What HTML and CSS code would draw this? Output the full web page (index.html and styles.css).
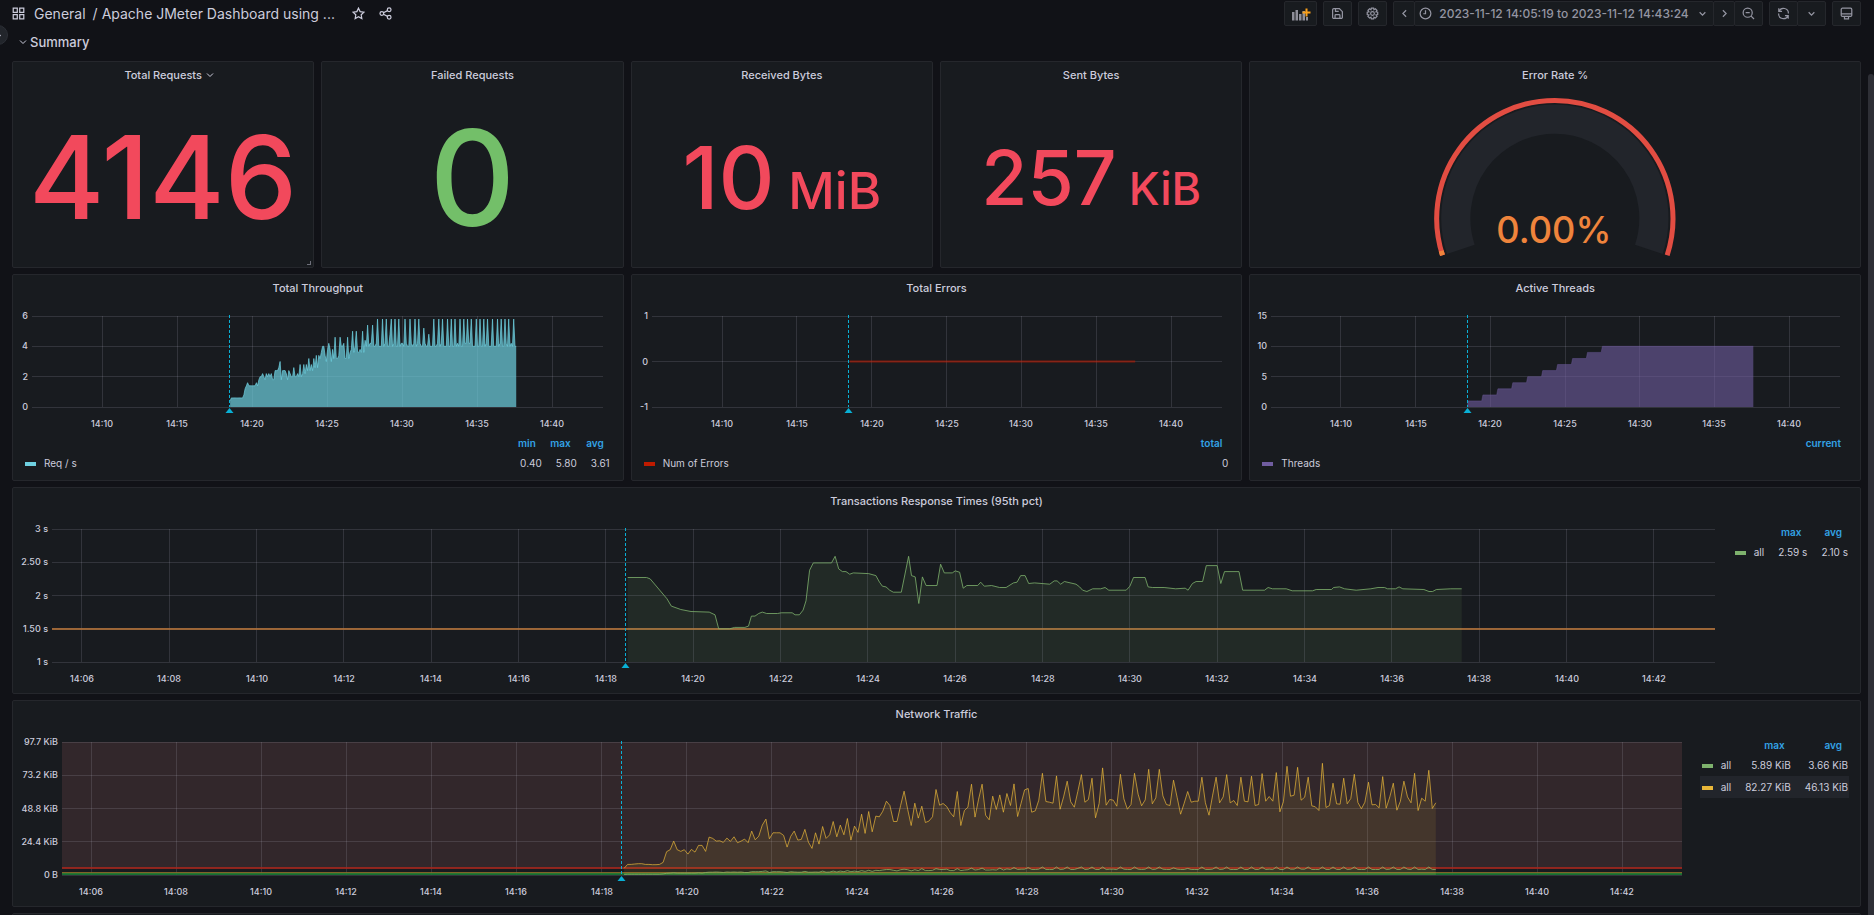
FILE: index.html
```html
<!DOCTYPE html>
<html lang="en">
<head>
  <meta charset="UTF-8">
  <meta name="viewport" content="width=device-width, initial-scale=1.0">
  <link rel="stylesheet" href="styles.css">
  <title>Apache JMeter Dashboard</title>
</head>
<body>
  <div class="app">
    <button class="menu-toggle" type="button" aria-label="Expand menu">
      <svg class="icon" viewBox="0 0 16 16"><path d="M6 4l4 4-4 4"/></svg>
    </button>

    <header class="navbar">
      <svg class="icon" viewBox="0 0 16 16"><path d="M1.5 1.5h5v5h-5zM9.5 1.5h5v5h-5zM1.5 9.5h5v5h-5zM9.5 9.5h5v5h-5z"/></svg>
      <h1 class="breadcrumb">
        <a href="#">General</a><span class="slash">/</span><a href="#">Apache JMeter Dashboard using ...</a>
      </h1>
      <button class="plain" type="button" aria-label="Mark as favorite">
        <svg class="icon" viewBox="0 0 16 16"><path d="M8 1.4l2 4.3 4.7.6-3.4 3.3.8 4.7L8 12l-4.1 2.3.8-4.7L1.3 6.3 6 5.7z"/></svg>
      </button>
      <button class="plain" type="button" aria-label="Share dashboard">
        <svg class="icon" viewBox="0 0 16 16"><circle cx="3.5" cy="8" r="2.3"/><circle cx="12.5" cy="3.5" r="2.3"/><circle cx="12.5" cy="12.5" r="2.3"/><path d="M5.5 7l5-2.5M5.5 9l5 2.5"/></svg>
      </button>

      <div class="toolbar">
        <button class="btn btn-add" type="button" aria-label="Add panel">
          <svg class="icon-add" viewBox="0 0 20 14"><path class="bars" d="M1 5h2.5v8.5H1zM4.5 3H7v10.5H4.5zM8 7h2.5v6.5H8zM11.5 4H14v9.5h-2.5zM15 10h2v3.5h-2z"/><path class="plus" d="M15.5 1.5v8M11.5 5.5h8"/></svg>
        </button>
        <button class="btn" type="button" aria-label="Save dashboard">
          <svg class="icon" viewBox="0 0 16 16"><path d="M3.5 2h6.8L14 5.7v6.8a1.5 1.5 0 0 1-1.5 1.5h-9A1.5 1.5 0 0 1 2 12.5v-9A1.5 1.5 0 0 1 3.5 2zM5.5 2v3.5h4M5 14v-3.5a1 1 0 0 1 1-1h4a1 1 0 0 1 1 1V14"/></svg>
        </button>
        <button class="btn" type="button" aria-label="Dashboard settings">
          <svg class="icon" viewBox="0 0 16 16"><path d="M6.6 1.3h2.8l.4 2 1.7-1.1 2 2-1.2 1.7 2.1.5v2.9l-2.1.5 1.2 1.8-2 2-1.7-1.1-.4 2H6.6l-.5-2-1.7 1.1-2-2 1.2-1.8-2.1-.5V6.4l2.1-.5-1.2-1.7 2-2 1.7 1.1z"/><circle cx="8" cy="8" r="2.3"/></svg>
        </button>
        <div class="btn-group">
          <button class="btn btn-narrow" type="button" aria-label="Move time range backwards">
            <svg class="icon" viewBox="0 0 16 16"><path d="M10 4L6 8l4 4"/></svg>
          </button>
          <button class="btn btn-time" type="button">
            <svg class="icon" viewBox="0 0 16 16"><circle cx="8" cy="8" r="6.6"/><path d="M8 4v4.3H5.3"/></svg>
            <span>2023-11-12 14:05:19 to 2023-11-12 14:43:24</span>
            <svg class="icon" viewBox="0 0 16 16"><path d="M4.5 6.5L8 10l3.5-3.5"/></svg>
          </button>
          <button class="btn btn-narrow" type="button" aria-label="Move time range forwards">
            <svg class="icon" viewBox="0 0 16 16"><path d="M6 4l4 4-4 4"/></svg>
          </button>
          <button class="btn" type="button" aria-label="Zoom out time range">
            <svg class="icon" viewBox="0 0 16 16"><circle cx="7" cy="7" r="5.6"/><path d="M11.2 11.2l3.6 3.6M4.5 7h5"/></svg>
          </button>
        </div>
        <div class="btn-group">
          <button class="btn" type="button" aria-label="Refresh dashboard">
            <svg class="icon" viewBox="0 0 16 16"><path d="M2.2 1.5v4h4M2.5 5.3A6 6 0 0 1 14 8M13.8 14.5v-4h-4M13.5 10.7A6 6 0 0 1 2 8"/></svg>
          </button>
          <button class="btn" type="button" aria-label="Auto refresh interval">
            <svg class="icon" viewBox="0 0 16 16"><path d="M4.5 6.5L8 10l3.5-3.5"/></svg>
          </button>
        </div>
        <button class="btn" type="button" aria-label="Cycle view mode">
          <svg class="icon" viewBox="0 0 16 16"><path d="M3 1.5h10A1.5 1.5 0 0 1 14.5 3v7a1.5 1.5 0 0 1-1.5 1.5H3A1.5 1.5 0 0 1 1.5 10V3A1.5 1.5 0 0 1 3 1.5zM1.5 8.5h13M5.5 11.5v3h5v-3"/></svg>
        </button>
      </div>
    </header>

    <main class="dashboard">
      <button class="row-title" type="button">
        <svg class="icon icon-sm" viewBox="0 0 16 16"><path d="M2 5l6 6 6-6"/></svg>
        Summary
      </button>

      <div class="panels">
        <section class="panel">
          <h2>Total Requests <svg class="icon icon-sm" viewBox="0 0 16 16"><path d="M2 5l6 6 6-6"/></svg></h2>
          <div class="stat stat-xl red">4146</div>
          <span class="resize-handle"></span>
        </section>
        <section class="panel">
          <h2>Failed Requests</h2>
          <div class="stat stat-xxl green">0</div>
        </section>
        <section class="panel">
          <h2>Received Bytes</h2>
          <div class="stat stat-lg red"><p>10<span class="unit"> MiB</span></p></div>
        </section>
        <section class="panel">
          <h2>Sent Bytes</h2>
          <div class="stat stat-md red"><p>257<span class="unit"> KiB</span></p></div>
        </section>
        <section class="panel span-2">
          <h2>Error Rate %</h2>
          <svg class="gauge" viewBox="0 0 260 178">
            <path class="gauge-track" d="M36.5 160.4A98.5 98.5 0 1 1 223.5 160.4"/>
            <path class="gauge-limit" d="M18.3 166.3A117.5 117.5 0 1 1 241.7 166.3"/>
            <path class="gauge-value" d="M18.3 166.3A117.5 117.5 0 0 1 17 162"/>
            <text x="129" y="154">0.00%</text>
          </svg>
        </section>

        <section class="panel span-2">
          <h2>Total Throughput</h2>
          <div class="chart" id="throughput"></div>
          <table class="legend legend-bottom">
            <thead><tr><td class="name"></td><th>min</th><th>max</th><th>avg</th></tr></thead>
            <tbody><tr><td class="name"><i class="swatch cyan"></i>Req / s</td><td>0.40</td><td>5.80</td><td>3.61</td></tr></tbody>
          </table>
        </section>
        <section class="panel span-2">
          <h2>Total Errors</h2>
          <div class="chart" id="errors"></div>
          <table class="legend legend-bottom">
            <thead><tr><td class="name"></td><th>total</th></tr></thead>
            <tbody><tr><td class="name"><i class="swatch dark-red"></i>Num of Errors</td><td>0</td></tr></tbody>
          </table>
        </section>
        <section class="panel span-2">
          <h2>Active Threads</h2>
          <div class="chart" id="threads"></div>
          <table class="legend legend-bottom">
            <thead><tr><td class="name"></td><th>current</th></tr></thead>
            <tbody><tr><td class="name"><i class="swatch purple"></i>Threads</td><td></td></tr></tbody>
          </table>
        </section>

        <section class="panel span-6">
          <h2>Transactions Response Times (95th pct)</h2>
          <div class="with-legend">
            <div class="chart" id="response"></div>
            <table class="legend legend-side">
              <thead><tr><td></td><th>max</th><th>avg</th></tr></thead>
              <tbody><tr><td class="name"><i class="swatch light-green"></i>all</td><td>2.59 s</td><td>2.10 s</td></tr></tbody>
            </table>
          </div>
        </section>

        <section class="panel span-6">
          <h2>Network Traffic</h2>
          <div class="with-legend">
            <div class="chart" id="network"></div>
            <table class="legend legend-side">
              <thead><tr><td></td><th>max</th><th>avg</th></tr></thead>
              <tbody>
                <tr><td class="name"><i class="swatch light-green"></i>all</td><td>5.89 KiB</td><td>3.66 KiB</td></tr>
                <tr class="active"><td class="name"><i class="swatch yellow"></i>all</td><td>82.27 KiB</td><td>46.13 KiB</td></tr>
              </tbody>
            </table>
          </div>
        </section>

        <section class="panel span-6"></section>
      </div>
    </main>
    <div class="scrollbar"></div>
  </div>
  <script src="charts.js"></script>
</body>
</html>
```
FILE: styles.css
```css
* {
  box-sizing: border-box;
}

body {
  margin: 0;
  background: #111217;
  color: #ccccdc;
  font-family: Inter, "Liberation Sans", sans-serif;
  font-size: 11px;
  font-optical-sizing: none;
}

a {
  color: inherit;
  text-decoration: none;
}

button {
  font: inherit;
  color: inherit;
  cursor: pointer;
}

.app {
  position: relative;
  height: 100vh;
  overflow: hidden;
}

.icon {
  width: 13px;
  height: 13px;
  fill: none;
  stroke: currentColor;
  stroke-width: 1.5;
  flex: none;
}

.icon-sm {
  width: 8px;
  height: 8px;
  stroke-width: 2;
}

/* Top bar */
.navbar {
  display: flex;
  align-items: center;
  height: 27px;
  padding: 0 13px 0 12px;
}

.breadcrumb {
  display: flex;
  margin: 0 10px 0 9px;
  font-size: 14px;
  font-weight: 400;
  line-height: 20px;
}

.slash {
  margin: 0 4px 0 7px;
}

.plain {
  display: flex;
  padding: 0;
  margin-left: 7px;
  margin-right: 7px;
  border: 0;
  background: none;
}

.toolbar {
  display: flex;
  gap: 6px;
  margin-left: auto;
}

.btn {
  display: flex;
  align-items: center;
  justify-content: center;
  width: 29px;
  height: 25px;
  padding: 0;
  border: 1px solid #25272c;
  border-radius: 2px;
  background: #181b1f;
  color: #9495a2;
}

.btn-group {
  display: flex;
}

.btn-group .btn + .btn {
  margin-left: -1px;
}

.btn-narrow {
  width: 22px;
}

.btn-add {
  width: 33px;
}

.btn-time {
  width: 300px;
  gap: 7px;
  font-size: 12px;
  font-weight: 500;
}

.icon-add {
  width: 20px;
  height: 14px;
}

.bars {
  fill: #8e8e99;
}

.plus {
  stroke: #f9a01b;
  stroke-width: 2;
}

.menu-toggle {
  position: absolute;
  top: 25px;
  left: -12px;
  display: flex;
  align-items: center;
  justify-content: center;
  width: 20px;
  height: 20px;
  padding: 0;
  border: 1px solid #2c2f36;
  border-radius: 50%;
  background: #22252b;
}

.scrollbar {
  position: absolute;
  top: 74px;
  right: 0;
  bottom: 0;
  width: 6px;
  border-radius: 3px 3px 0 0;
  background: #2e2f36;
}

/* Dashboard */
.dashboard {
  padding: 0 13px 0 12px;
}

.row-title {
  display: flex;
  align-items: center;
  gap: 3px;
  height: 30px;
  margin-bottom: 4px;
  padding: 0 0 0 7px;
  border: 0;
  background: none;
  font-size: 13px;
  font-weight: 500;
}

.panels {
  display: grid;
  grid-template-columns: repeat(6, 1fr);
  grid-auto-rows: 207px;
  gap: 6px 7px;
}

.panel {
  position: relative;
  display: flex;
  flex-direction: column;
  min-width: 0;
  border: 1px solid #25272c;
  border-radius: 2px;
  background: #181b1f;
}

.span-2 {
  grid-column: span 2;
}

.span-6 {
  grid-column: span 6;
}

.panel h2 {
  display: flex;
  align-items: center;
  justify-content: center;
  gap: 4px;
  height: 26px;
  margin: 0;
  font-size: 11px;
  font-weight: 500;
}

/* keeps the title itself centred */
.panel h2 .icon {
  margin-right: -12px;
}

.resize-handle {
  position: absolute;
  right: 2px;
  bottom: 2px;
  width: 4px;
  height: 4px;
  border: solid #6e6f7a;
  border-width: 0 1px 1px 0;
}

/* Stat panels */
.stat {
  display: flex;
  flex: 1;
  align-items: center;
  justify-content: center;
  font-weight: 500;
  line-height: 1;
}

.stat p {
  margin: 0;
}

.stat-xxl { font-size: 133px; }
.stat-xl { font-size: 115px; }
.stat-lg { font-size: 87px; }
.stat-md { font-size: 75px; }
.stat-lg .unit { font-size: 51px; }
.stat-md .unit { font-size: 45px; }

.unit {
  white-space: pre;
}

.red { color: #f2495c; }
.green { color: #73bf69; }

.gauge {
  flex: 1;
  min-height: 0;
  fill: none;
}

.gauge-track {
  stroke: #22252b;
  stroke-width: 29;
}

.gauge-limit {
  stroke: #e24d42;
  stroke-width: 5;
}

.gauge-value {
  stroke: #ef843c;
  stroke-width: 5;
}

.gauge text {
  fill: #ef843c;
  font-size: 36px;
  font-weight: 500;
  text-anchor: middle;
}

/* Graph panels */
.chart {
  flex: 1;
  min-width: 0;
  min-height: 0;
}

.chart svg {
  display: block;
  overflow: visible;
}

.chart text {
  fill: #ccccdc;
  font-size: 9px;
  font-weight: 500;
}

.with-legend {
  display: flex;
  flex: 1;
  min-height: 0;
}

.grid {
  stroke: #ccccdc;
  stroke-opacity: 0.15;
}

.annotation {
  stroke: #09b0d5;
  stroke-dasharray: 3 2;
}

.annotation-mark {
  fill: #09b0d5;
}

.legend {
  border-collapse: collapse;
  font-size: 10px;
}

.legend th,
.legend td {
  padding: 0 1px 0 13px;
  text-align: right;
  white-space: nowrap;
}

.legend th {
  padding-left: 4px;
  padding-right: 7px;
  color: #33a2e5;
  font-weight: 600;
}

.legend .name {
  padding-left: 2px;
  text-align: left;
}

.legend-bottom {
  margin: 0 12px 7px 10px;
}

.legend-bottom .name {
  width: 100%;
}

.legend-bottom tr {
  height: 20px;
}

.legend-side {
  align-self: flex-start;
  margin: 9px 11px 0 18px;
}

.legend-side tr {
  height: 22px;
}

.legend-side thead tr {
  height: 18px;
}

.active {
  background: #22252b;
}

.swatch {
  display: inline-block;
  width: 11px;
  height: 4px;
  margin-right: 8px;
  vertical-align: middle;
}

.cyan { background: #6ed0e0; }
.dark-red { background: #bf1b00; }
.purple { background: #705da0; }
.light-green { background: #7eb26d; }
.yellow { background: #eab839; }
```
FILE: charts.js
```js
// All times are minutes after 14:00
const FROM = 5 + 19 / 60;
const TO = 43 + 24 / 60;
const START = 18.53;
const END = 37.6;
const ANNOTATION = 18.46;
const STEP = 5 / 60;

// Received bytes, one sample every 5 s, in units of 250 bytes
const received = [
  20, 32, 32, 33, 34, 34, 32, 32, 31, 31, 32, 38, 70, 76, 102, 76, 71, 76, 63, 77,
  69, 89, 89, 71, 114, 110, 102, 103, 98, 111, 101, 115, 97, 102, 108, 97, 132, 106, 117, 150,
  168, 109, 127, 127, 127, 119, 84, 116, 132, 105, 107, 137, 99, 80, 127, 93, 146, 110, 121, 161,
  115, 150, 121, 170, 105, 147, 128, 183, 125, 191, 130, 177, 175, 192, 222, 209, 161, 161, 209, 252,
  197, 149, 216, 171, 207, 158, 162, 175, 257, 210, 215, 206, 188, 175, 251, 149, 194, 204, 273, 174,
  228, 273, 180, 166, 237, 197, 241, 189, 245, 209, 274, 176, 216, 256, 260, 189, 193, 225, 306, 221,
  219, 216, 298, 198, 235, 282, 220, 204, 251, 302, 219, 227, 291, 172, 215, 322, 210, 227, 225, 207,
  303, 229, 198, 212, 306, 243, 208, 226, 318, 214, 232, 318, 238, 212, 209, 285, 234, 183, 216, 251,
  219, 222, 222, 294, 217, 180, 238, 294, 217, 235, 302, 217, 224, 209, 294, 222, 220, 297, 209, 212,
  305, 222, 236, 222, 308, 190, 220, 327, 237, 240, 324, 225, 234, 294, 208, 205, 194, 336, 203, 209,
  276, 214, 213, 291, 214, 230, 303, 218, 199, 219, 279, 211, 212, 202, 296, 201, 235, 276, 195, 222,
  282, 235, 217, 306, 194, 231, 222, 315, 200, 217
];

// Requests per second during ramp-up, one sample every 5 s
const rampUp = [
  0.4, 0.6, 0.6, 0.6, 0.6, 0.6, 0.6, 0.6, 0.6, 0.6, 0.6, 0.8, 1.2, 1.4, 1.6, 1.4, 1.4, 1.4, 1.4, 1.4,
  1.4, 1.6, 1.4, 1.8, 2.0, 2.0, 2.2, 2.0, 1.8, 2.2, 2.0, 2.2, 2.0, 2.2, 1.8, 1.8, 2.4, 2.4, 2.4, 2.6,
  3.0, 1.8, 2.4, 2.4, 2.4, 2.2, 1.8, 2.4, 2.2, 2.0, 2.0, 2.6, 2.0, 2.0, 2.2, 2.0, 2.8, 2.0, 2.2, 2.8,
  2.2, 2.8, 2.4, 3.2, 2.4, 2.8, 2.4, 3.2, 2.6, 3.4, 2.6, 3.4, 3.2, 3.6, 4.0, 4.0, 3.4, 3.0, 3.8, 4.2,
  3.8, 3.0, 3.8, 3.2, 4.6, 3.2, 3.2, 3.4, 4.6, 4.0, 4.0, 4.2, 3.2, 3.2, 4.6, 3.2, 3.6, 3.8, 5.0, 3.6,
  4.0, 5.0, 3.6, 3.6, 3.8, 3.6, 5.0, 3.6, 4.4, 4.0, 5.4, 4.0, 4.2, 4.2, 5.4, 4.0
];

const requests = rampUp.concat(received.slice(rampUp.length).map(n => {
  if (n === 285) return 5.2;
  if (n === 251) return 4.8;
  if (n > 270) return 5.8;
  return n > 224 ? 4.2 : 4;
}));

// 95th percentile: [seconds after start, response time in s]
const response = [
  [0, 2.27], [26, 2.27], [31, 2.25], [54, 1.95], [60, 1.84], [73, 1.79], [87, 1.76], [112, 1.75],
  [120, 1.71], [125, 1.50], [140, 1.50], [147, 1.52], [161, 1.52], [166, 1.54], [170, 1.69], [175, 1.69],
  [180, 1.73], [185, 1.75], [191, 1.73], [206, 1.73], [211, 1.74], [226, 1.74], [230, 1.71], [236, 1.71],
  [241, 1.78], [245, 1.92], [250, 2.38], [255, 2.49], [280, 2.49], [285, 2.59], [290, 2.40], [295, 2.36],
  [300, 2.36], [305, 2.32], [310, 2.34], [331, 2.33], [341, 2.30], [346, 2.20], [350, 2.14], [355, 2.13],
  [360, 2.08], [365, 2.05], [376, 2.05], [386, 2.59], [390, 2.30], [395, 2.28], [400, 1.88], [405, 2.28],
  [410, 2.15], [425, 2.15], [430, 2.47], [435, 2.34], [446, 2.34], [450, 2.37], [456, 2.35], [461, 2.11],
  [466, 2.15], [481, 2.15], [485, 2.20], [490, 2.14], [500, 2.15], [511, 2.12], [520, 2.12], [530, 2.19],
  [535, 2.20], [540, 2.30], [546, 2.30], [551, 2.18], [559, 2.19], [580, 2.17], [586, 2.22], [590, 2.22],
  [595, 2.17], [600, 2.21], [616, 2.17], [621, 2.13], [625, 2.08], [631, 2.06], [639, 2.10], [650, 2.10],
  [656, 2.12], [661, 2.08], [685, 2.08], [690, 2.14], [695, 2.27], [711, 2.27], [715, 2.13], [721, 2.12],
  [737, 2.12], [753, 2.10], [766, 2.11], [770, 2.08], [776, 2.18], [781, 2.21], [790, 2.21], [795, 2.45],
  [810, 2.45], [815, 2.18], [820, 2.36], [840, 2.36], [845, 2.08], [875, 2.08], [880, 2.12], [886, 2.10],
  [905, 2.10], [913, 2.07], [941, 2.07], [946, 2.09], [967, 2.09], [970, 2.12], [978, 2.13], [985, 2.10],
  [1001, 2.08], [1021, 2.10], [1031, 2.12], [1040, 2.12], [1044, 2.10], [1055, 2.10], [1060, 2.13],
  [1065, 2.10], [1094, 2.09], [1101, 2.06], [1106, 2.06], [1111, 2.09], [1131, 2.10], [1146, 2.10]
];

// One more thread every minute, up to ten
const threads = [[18.46, 0]];
for (let n = 1; n <= 10; n++) {
  threads.push([17.5 + n, n], [n < 10 ? 18.42 + n : END, n]);
}

const sampled = values => values.map((v, i) => [START + i * STEP, v]);

const charts = {
  throughput: {
    left: 19, right: 20, height: 91, every: 5, min: 0, max: 6,
    ticks: [[0, '0'], [2, '2'], [4, '4'], [6, '6']],
    series: [{ color: '#6ed0e0', fill: 0.7, stroke: 0.7, points: sampled(requests) }]
  },
  errors: {
    left: 20, right: 20, height: 91, every: 5, min: -1, max: 1,
    ticks: [[-1, '-1'], [0, '0'], [1, '1']],
    series: [{ color: '#bf1b00', fill: 0, stroke: 0.6, width: 2, points: [[START, 0], [END, 0]] }]
  },
  threads: {
    left: 21, right: 20, height: 91, every: 5, min: 0, max: 15,
    ticks: [[0, '0'], [5, '5'], [10, '10'], [15, '15']],
    series: [{ color: '#705da0', fill: 0.6, stroke: 0.4, points: threads }]
  },
  response: {
    left: 39, right: 0, height: 133, every: 2, min: 1, max: 3,
    ticks: [[1, '1 s'], [1.5, '1.50 s'], [2, '2 s'], [2.5, '2.50 s'], [3, '3 s']],
    limits: [{ value: 1.5, color: '#b0713a', width: 2 }],
    series: [{ color: '#7eb26d', fill: 0.1, stroke: 0.8, points: response.map(([s, v]) => [18.5 + s / 60, v]) }]
  },
  network: {
    left: 49, right: 0, height: 133, every: 2, min: 0, max: 100000,
    ticks: [[0, '0 B'], [25000, '24.4 KiB'], [50000, '48.8 KiB'], [75000, '73.2 KiB'], [100000, '97.7 KiB']],
    region: { from: 5000, color: '#f08783' },
    limits: [
      { value: 5000, color: '#a3271d', width: 2 },
      { value: 1700, color: '#94702a', width: 2 },
      { value: 500, color: '#197a35', width: 2 }
    ],
    series: [
      { color: '#7eb26d', fill: 0.1, stroke: 0.8, points: sampled(requests.map(v => v * 1040)) },
      { color: '#eab839', fill: 0.1, stroke: 0.7, points: sampled(received.map(n => n * 250)) }
    ]
  }
};

function draw(id, c) {
  const el = document.getElementById(id);
  const width = el.clientWidth;
  const top = 15;
  const bottom = top + c.height;
  const right = width - c.right;
  const x = t => c.left + (t - FROM) / (TO - FROM) * (right - c.left);
  const y = v => bottom - (v - c.min) / (c.max - c.min) * c.height;
  const crisp = n => Math.floor(n) + 0.5;
  let svg = '';

  if (c.region) {
    svg += `<rect x="${c.left}" y="${top}" width="${right - c.left}" height="${y(c.region.from) - top}" fill="${c.region.color}" fill-opacity="0.12"/>`;
  }

  c.ticks.forEach(([v, label]) => {
    svg += `<path class="grid" d="M${c.left} ${crisp(y(v))}H${right}"/>`;
    svg += `<text x="${c.left - 4}" y="${Math.round(y(v)) + 3}" text-anchor="end">${label}</text>`;
  });
  for (let t = Math.ceil(FROM / c.every) * c.every; t < TO; t += c.every) {
    svg += `<path class="grid" d="M${crisp(x(t))} ${top}V${bottom}"/>`;
    svg += `<text x="${Math.round(x(t))}" y="${bottom + 20}" text-anchor="middle">14:${String(t).padStart(2, '0')}</text>`;
  }

  (c.limits || []).forEach(l => {
    svg += `<path d="M${c.left} ${Math.round(y(l.value))}H${right}" stroke="${l.color}" stroke-width="${l.width}" stroke-opacity="0.85"/>`;
  });

  c.series.forEach(s => {
    const line = s.points.map(([t, v]) => `${x(t).toFixed(1)} ${y(v).toFixed(1)}`).join('L');
    const first = x(s.points[0][0]);
    const last = x(s.points[s.points.length - 1][0]);
    if (s.fill) svg += `<path d="M${first} ${bottom}L${line}L${last} ${bottom}Z" fill="${s.color}" fill-opacity="${s.fill}"/>`;
    svg += `<path d="M${line}" fill="none" stroke="${s.color}" stroke-opacity="${s.stroke}" stroke-width="${s.width || 1}"/>`;
  });

  const a = crisp(x(ANNOTATION));
  svg += `<path class="annotation" d="M${a} ${top - 1}V${bottom}"/>`;
  svg += `<path class="annotation-mark" d="M${a} ${bottom + 1}l4 5h-8z"/>`;

  el.innerHTML = `<svg width="${width}" height="${bottom + 24}">${svg}</svg>`;
}

function drawAll() {
  Object.keys(charts).forEach(id => draw(id, charts[id]));
}

drawAll();
window.addEventListener('resize', drawAll);
```
